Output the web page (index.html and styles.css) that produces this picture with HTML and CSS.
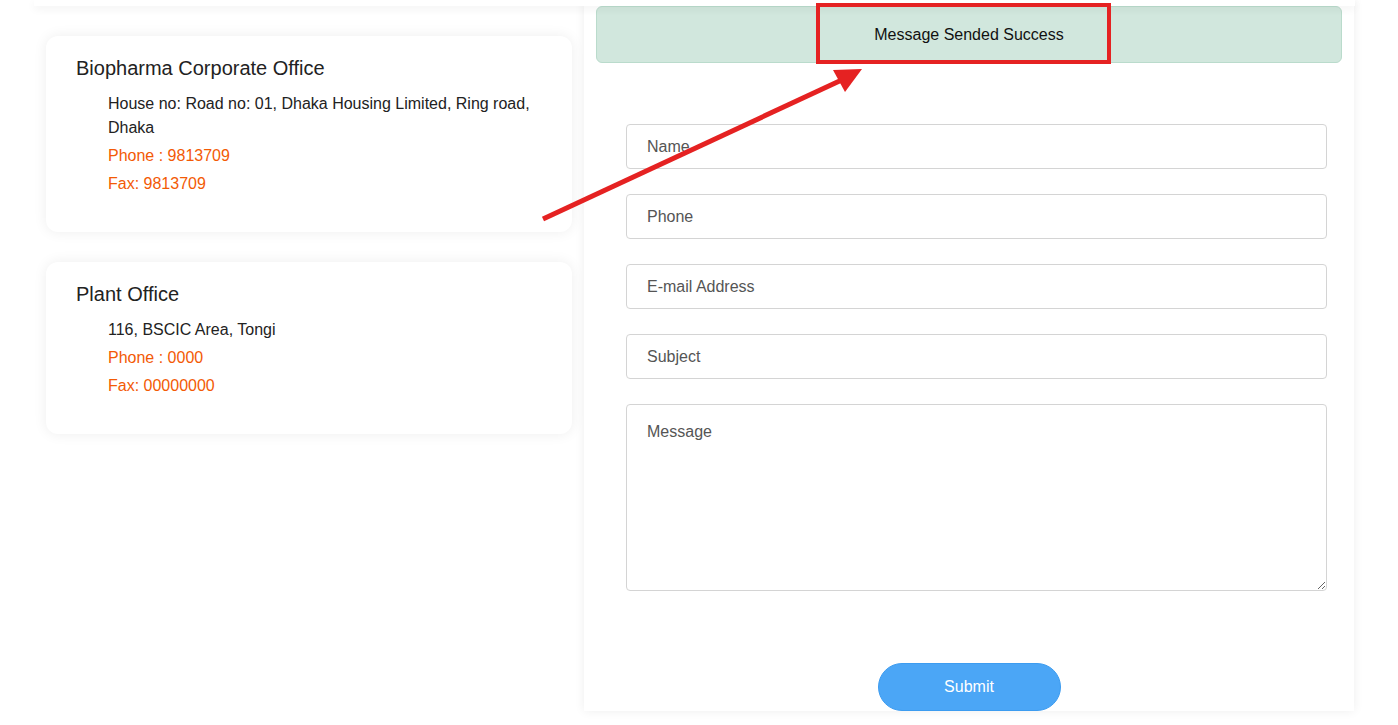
FILE: index.html
```html
<!DOCTYPE html>
<html lang="en">
<head>
<meta charset="utf-8">
<title>Contact</title>
<link rel="stylesheet" href="styles.css">
</head>
<body>
<div class="page">
  <div class="top-bar"></div>
  <div class="main">
    <div class="offices">
      <div class="card">
        <h4 class="card-title">Biopharma Corporate Office</h4>
        <ul class="card-list">
          <li>House no: Road no: 01, Dhaka Housing Limited, Ring road, Dhaka</li>
          <li class="accent">Phone : 9813709</li>
          <li class="accent">Fax: 9813709</li>
        </ul>
      </div>
      <div class="card">
        <h4 class="card-title">Plant Office</h4>
        <ul class="card-list">
          <li>116, BSCIC Area, Tongi</li>
          <li class="accent">Phone : 0000</li>
          <li class="accent">Fax: 00000000</li>
        </ul>
      </div>
    </div>
    <div class="panel">
      <div class="alert">Message Sended Success</div>
      <form class="form">
        <input class="field" type="text" placeholder="Name">
        <input class="field" type="text" placeholder="Phone">
        <input class="field" type="text" placeholder="E-mail Address">
        <input class="field" type="text" placeholder="Subject">
        <textarea class="field area" placeholder="Message"></textarea>
      </form>
      <div class="actions">
        <button class="submit" type="button">Submit</button>
      </div>
    </div>
  </div>
  <div class="highlight"></div>
  <svg class="arrow" width="1398" height="725" viewBox="0 0 1398 725">
    <line x1="543" y1="219" x2="846" y2="78" stroke="#e52222" stroke-width="5"/>
    <polygon points="862,69 833,70 845,92" fill="#e52222"/>
  </svg>
</div>
</body>
</html>
```

FILE: styles.css
```css
html, body {
  margin: 0;
  padding: 0;
  background: #ffffff;
  font-family: "Liberation Sans", Arial, sans-serif;
  color: #222222;
}

.page {
  position: relative;
  width: 1398px;
  height: 725px;
  overflow: hidden;
}

.top-bar {
  position: relative;
  z-index: 1;
  margin-left: 34px;
  width: 1321px;
  height: 6px;
  background: #ffffff;
  box-shadow: 0 3px 8px rgba(0, 0, 0, 0.06);
}

.main {
  display: flex;
  gap: 12px;
  margin-top: -6px;
  margin-left: 34px;
  width: 1321px;
  padding-left: 12px;
  box-sizing: border-box;
}

.offices {
  width: 526px;
  padding-top: 36px;
  display: flex;
  flex-direction: column;
  gap: 30px;
}

.card {
  background: #ffffff;
  border-radius: 12px;
  box-shadow: 0 0 14px rgba(0, 0, 0, 0.07);
  padding: 20px 30px 32px 30px;
}

.card-title {
  margin: 0 0 12px 0;
  font-size: 20px;
  line-height: 24px;
  font-weight: 400;
  color: #222222;
}

.card-list {
  list-style: none;
  margin: 0;
  padding: 0 0 0 32px;
}

.card-list li {
  font-size: 16px;
  line-height: 24px;
  margin-bottom: 4px;
  color: #222222;
}

.card-list li.accent {
  color: #f35a05;
}

.panel {
  width: 770px;
  height: 711px;
  background: #ffffff;
  box-shadow: 0 0 10px rgba(0, 0, 0, 0.07);
  padding-top: 6px;
  box-sizing: border-box;
  display: flex;
  flex-direction: column;
}

.alert {
  margin: 0 12px;
  height: 57px;
  box-sizing: border-box;
  background: #d1e7dd;
  border: 1px solid #badbcc;
  border-radius: 6px;
  color: #111111;
  font-size: 16px;
  display: flex;
  align-items: center;
  justify-content: center;
}

.form {
  display: flex;
  flex-direction: column;
  gap: 25px;
  padding: 61px 27px 0 42px;
}

.field {
  display: block;
  width: 100%;
  height: 45px;
  box-sizing: border-box;
  margin: 0;
  border: 1px solid #d4d4d4;
  border-radius: 4px;
  padding: 0 20px;
  font-family: "Liberation Sans", Arial, sans-serif;
  font-size: 16px;
  color: #222222;
  background: #ffffff;
  outline: none;
}

.field::placeholder {
  color: #555555;
  opacity: 1;
}

.area {
  height: 187px;
  padding: 18px 20px 16px 20px;
  line-height: 18px;
  resize: vertical;
}

.actions {
  display: flex;
  justify-content: center;
  padding-top: 72px;
}

.submit {
  width: 183px;
  height: 48px;
  border: 1px solid #3d9cf0;
  border-radius: 24px;
  background: #4ba6f6;
  color: #ffffff;
  font-family: "Liberation Sans", Arial, sans-serif;
  font-size: 16px;
  cursor: pointer;
}

.highlight {
  position: absolute;
  left: 816px;
  top: 3px;
  width: 295px;
  height: 61px;
  box-sizing: border-box;
  border: 4px solid #e52222;
  z-index: 2;
}

.arrow {
  position: absolute;
  left: 0;
  top: 0;
  z-index: 3;
  pointer-events: none;
}
```
